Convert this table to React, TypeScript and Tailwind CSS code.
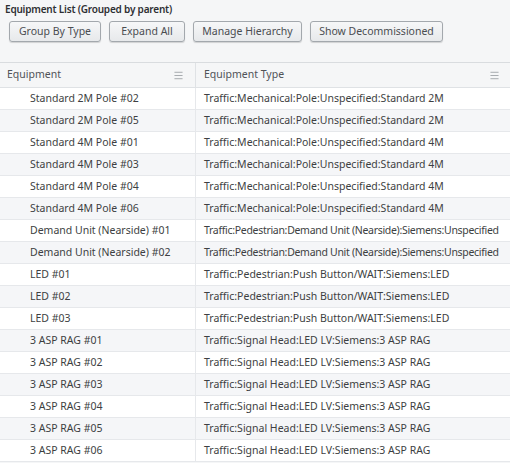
import { Menu } from 'lucide-react'

type Row = { name: string; type: string; tight?: boolean }

const ROWS: Row[] = [
  { name: 'Standard 2M Pole #02', type: 'Traffic:Mechanical:Pole:Unspecified:Standard 2M' },
  { name: 'Standard 2M Pole #05', type: 'Traffic:Mechanical:Pole:Unspecified:Standard 2M' },
  { name: 'Standard 4M Pole #01', type: 'Traffic:Mechanical:Pole:Unspecified:Standard 4M' },
  { name: 'Standard 4M Pole #03', type: 'Traffic:Mechanical:Pole:Unspecified:Standard 4M' },
  { name: 'Standard 4M Pole #04', type: 'Traffic:Mechanical:Pole:Unspecified:Standard 4M' },
  { name: 'Standard 4M Pole #06', type: 'Traffic:Mechanical:Pole:Unspecified:Standard 4M' },
  { name: 'Demand Unit (Nearside) #01', type: 'Traffic:Pedestrian:Demand Unit (Nearside):Siemens:Unspecified', tight: true },
  { name: 'Demand Unit (Nearside) #02', type: 'Traffic:Pedestrian:Demand Unit (Nearside):Siemens:Unspecified', tight: true },
  { name: 'LED #01', type: 'Traffic:Pedestrian:Push Button/WAIT:Siemens:LED' },
  { name: 'LED #02', type: 'Traffic:Pedestrian:Push Button/WAIT:Siemens:LED' },
  { name: 'LED #03', type: 'Traffic:Pedestrian:Push Button/WAIT:Siemens:LED' },
  { name: '3 ASP RAG #01', type: 'Traffic:Signal Head:LED LV:Siemens:3 ASP RAG' },
  { name: '3 ASP RAG #02', type: 'Traffic:Signal Head:LED LV:Siemens:3 ASP RAG' },
  { name: '3 ASP RAG #03', type: 'Traffic:Signal Head:LED LV:Siemens:3 ASP RAG' },
  { name: '3 ASP RAG #04', type: 'Traffic:Signal Head:LED LV:Siemens:3 ASP RAG' },
  { name: '3 ASP RAG #05', type: 'Traffic:Signal Head:LED LV:Siemens:3 ASP RAG' },
  { name: '3 ASP RAG #06', type: 'Traffic:Signal Head:LED LV:Siemens:3 ASP RAG' },
]

const BUTTONS = [
  { label: 'Group By Type', w: 'w-[92px]' },
  { label: 'Expand All', w: 'w-[76px]' },
  { label: 'Manage Hierarchy', w: 'w-[109px]' },
  { label: 'Show Decommissioned', w: 'w-[133px]' },
]

export default function App() {
  return (
    <div className="w-[510px] h-[463px] overflow-hidden bg-[#f5f6f7] font-['Noto_Sans',sans-serif] text-[#3d3f42]">
      <div className="h-[62px] px-[5px] pt-[2px]">
        <h1 className="text-[10px] tracking-[-0.2px] font-semibold text-[#2e3033] leading-[15px]">Equipment List (Grouped by parent)</h1>
        <div className="flex gap-[8px] pl-1 mt-[4px]">
          {BUTTONS.map((b) => (
            <button
              key={b.label}
              className={`${b.w} h-[21px] rounded-[3px] border border-[#a3a8ad] bg-gradient-to-b from-[#f6f7f8] to-[#e7e9eb] shadow-[0_1px_1px_rgba(0,0,0,0.15)] text-[10.5px] text-[#4a4d51]`}
            >
              {b.label}
            </button>
          ))}
        </div>
      </div>

      <div className="border-t border-[#d9dcdf] bg-white">
        <div className="flex h-[25px] bg-[#f5f6f7] border-b border-[#dfe2e5] text-[10.5px] text-[#505357]">
          <div className="w-[196px] flex items-center justify-between pl-[7px] pr-[11px] border-r border-[#dfe2e5]">
            <span>Equipment</span>
            <Menu size={11} className="text-[#a0a4a8]" />
          </div>
          <div className="flex-1 flex items-center justify-between pl-[8px] pr-[10px]">
            <span>Equipment Type</span>
            <Menu size={11} className="text-[#a0a4a8]" />
          </div>
        </div>
        {ROWS.map((r, i) => (
          <div
            key={r.name}
            className={`flex h-[22px] border-b border-[#e6e8eb] text-[10.5px] text-[#3d3f42] ${i % 2 === 1 ? 'bg-[#f5f6f8]' : 'bg-white'}`}
          >
            <div className="w-[196px] flex items-center pl-[30px] border-r border-[#e6e8eb] whitespace-nowrap">{r.name}</div>
            <div className={`flex-1 flex items-center pl-[8px] whitespace-nowrap overflow-hidden ${r.tight ? 'tracking-[-0.3px]' : ''}`}>
              {r.type}
            </div>
          </div>
        ))}
      </div>
    </div>
  )
}
